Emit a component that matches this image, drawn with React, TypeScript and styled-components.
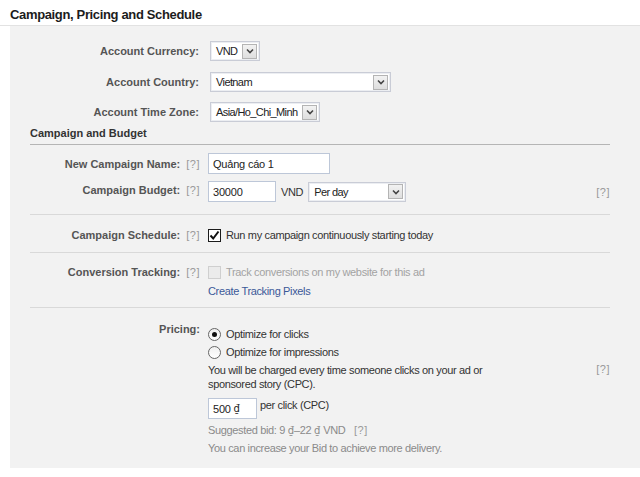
import { FC, ReactNode } from "react";
import styled, { createGlobalStyle } from "styled-components";

const GlobalStyle = createGlobalStyle`
  html, body {
    margin: 0;
    padding: 0;
    background: #ffffff;
  }
  body {
    font-family: "Liberation Sans", Arial, sans-serif;
    font-size: 11px;
    color: #333333;
  }
`;

const Page = styled.div`
  width: 640px;
  height: 477px;
  overflow: hidden;
`;

const Title = styled.h2`
  margin: 0;
  height: 25px;
  padding: 0 0 0 10px;
  line-height: 30px;
  font-size: 13px;
  letter-spacing: -0.35px;
  font-weight: bold;
  color: #1c1c1c;
  border-bottom: 1px solid #e2e2e2;
`;

const Panel = styled.div`
  margin-left: 10px;
  height: 442px;
  padding-top: 15px;
  box-sizing: border-box;
  background: #f2f2f2;
`;

const Section = styled.div<{ $divider?: boolean; $pt?: number; $pb?: number; $mt?: number }>`
  margin: ${(p) => p.$mt ?? 0}px 30px 0 20px;
  padding: ${(p) => p.$pt ?? 0}px 0 ${(p) => p.$pb ?? 0}px;
  border-top: ${(p) => (p.$divider ? "1px solid #d9d9d9" : "none")};
`;

const Row = styled.div<{ $labelWidth?: number; $gap?: number; $top?: number; $alignTop?: boolean }>`
  display: grid;
  grid-template-columns: ${(p) => p.$labelWidth ?? 170}px 1fr;
  column-gap: ${(p) => p.$gap ?? 8}px;
  align-items: ${(p) => (p.$alignTop ? "start" : "center")};
  margin-top: ${(p) => p.$top ?? 0}px;
`;

const Label = styled.div<{ $lineHeight?: number }>`
  text-align: right;
  font-weight: bold;
  color: #555555;
  white-space: nowrap;
  line-height: ${(p) => p.$lineHeight ?? 14}px;
`;

const Help = styled.span`
  font-weight: normal;
  color: #9a9a9a;
  margin-left: 6px;
  letter-spacing: 0.5px;
`;

const Controls = styled.div<{ $gap?: number; $top?: number; $alignTop?: boolean }>`
  display: flex;
  align-items: ${(p) => (p.$alignTop ? "flex-start" : "center")};
  gap: ${(p) => p.$gap ?? 6}px;
  margin-top: ${(p) => p.$top ?? 0}px;
`;

const Stack = styled.div<{ $pt?: number }>`
  display: flex;
  flex-direction: column;
  padding-top: ${(p) => p.$pt ?? 0}px;
`;

const SelectBox = styled.div<{ $width: number }>`
  width: ${(p) => p.$width}px;
  height: 20px;
  box-sizing: border-box;
  border: 1px solid #c9ccd6;
  box-shadow: inset 0 0 0 1px #eceef2;
  background: #ffffff;
  display: flex;
  align-items: center;
  justify-content: space-between;
  padding: 0 2px 0 5px;
  color: #222222;
  letter-spacing: -0.6px;
`;

const ArrowButton = styled.span`
  width: 15px;
  height: 15px;
  box-sizing: border-box;
  border: 1px solid #b4b4b4;
  background: linear-gradient(#f2f2f2, #dedede);
  display: flex;
  align-items: center;
  justify-content: center;
  flex: none;
`;

const TextInput = styled.div<{ $width: number }>`
  width: ${(p) => p.$width}px;
  height: 21px;
  box-sizing: border-box;
  border: 1px solid #bdc7d8;
  background: #ffffff;
  padding: 0 4px;
  display: flex;
  align-items: center;
  font-size: 11px;
  letter-spacing: -0.2px;
  color: #222222;
`;

const SubHeading = styled.div`
  margin: 1px 30px 0 20px;
  padding: 3px 0 4px;
  font-weight: bold;
  color: #333333;
  font-size: 11px;
  line-height: 14px;
  border-bottom: 1px solid #b5b5b5;
`;

const CheckBox = styled.span<{ $disabled?: boolean }>`
  width: 13px;
  height: 13px;
  box-sizing: border-box;
  border: 1px solid ${(p) => (p.$disabled ? "#cfcfcf" : "#1c1c1c")};
  background: ${(p) => (p.$disabled ? "#ebebeb" : "#ffffff")};
  display: inline-flex;
  align-items: center;
  justify-content: center;
  flex: none;
`;

const Radio = styled.span<{ $checked?: boolean }>`
  width: 13px;
  height: 13px;
  box-sizing: border-box;
  border-radius: 50%;
  border: 1px solid #666666;
  background: linear-gradient(#f0f0f0, #ffffff);
  display: inline-flex;
  align-items: center;
  justify-content: center;
  flex: none;
  &::after {
    content: "";
    display: ${(p) => (p.$checked ? "block" : "none")};
    width: 5px;
    height: 5px;
    border-radius: 50%;
    background: #111111;
  }
`;

const Option = styled.div<{ $muted?: boolean }>`
  display: flex;
  align-items: center;
  gap: 5px;
  height: 18px;
  letter-spacing: -0.35px;
  color: ${(p) => (p.$muted ? "#a3a3a3" : "#333333")};
`;

const Text = styled.div<{ $muted?: boolean; $top?: number }>`
  color: ${(p) => (p.$muted ? "#8a8a8a" : "#333333")};
  line-height: 14px;
  letter-spacing: -0.35px;
  margin-top: ${(p) => p.$top ?? 0}px;
`;

const Link = styled.a`
  color: #3b5998;
  text-decoration: none;
  line-height: 14px;
  letter-spacing: -0.35px;
  margin-top: 3px;
`;

const RightHelp = styled.span`
  margin-left: auto;
  color: #9a9a9a;
  letter-spacing: 0.5px;
`;

const Dong = styled.span`
  font-family: "DejaVu Sans", sans-serif;
  font-size: 10px;
  letter-spacing: 0;
`;

const Chevron: FC = () => (
  <svg width="8" height="6" viewBox="0 0 8 6">
    <path d="M1 1.5 L4 4.5 L7 1.5" fill="none" stroke="#444" strokeWidth="1.6" />
  </svg>
);

const Select: FC<{ width: number; children: ReactNode }> = ({ width, children }) => (
  <SelectBox $width={width}>
    <span>{children}</span>
    <ArrowButton>
      <Chevron />
    </ArrowButton>
  </SelectBox>
);

const Tick: FC = () => (
  <svg width="11" height="11" viewBox="0 0 11 11">
    <path d="M1.5 5.5 L4.2 8.5 L9.5 1.5" fill="none" stroke="#111" strokeWidth="2" />
  </svg>
);

const App: FC = () => {
  return (
    <Page>
      <GlobalStyle />
      <Title>Campaign, Pricing and Schedule</Title>
      <Panel>
        <Section>
          <Row $labelWidth={169} $gap={11}>
            <Label>Account Currency:</Label>
            <div>
              <Select width={50}>VND</Select>
            </div>
          </Row>
          <Row $labelWidth={169} $gap={11} $top={11}>
            <Label>Account Country:</Label>
            <div>
              <Select width={181}>Vietnam</Select>
            </div>
          </Row>
          <Row $labelWidth={169} $gap={11} $top={10}>
            <Label>Account Time Zone:</Label>
            <div>
              <Select width={110}>Asia/Ho_Chi_Minh</Select>
            </div>
          </Row>
        </Section>
        <SubHeading>Campaign and Budget</SubHeading>
        <Section>
          <Row $top={8}>
            <Label>
              New Campaign Name:<Help>[?]</Help>
            </Label>
            <div>
              <TextInput $width={122}>Quảng cáo 1</TextInput>
            </div>
          </Row>
          <Row $top={7} $alignTop>
            <Label $lineHeight={18}>
              Campaign Budget:<Help>[?]</Help>
            </Label>
            <Controls $gap={5}>
              <TextInput $width={68}>30000</TextInput>
              <Text>VND</Text>
              <Select width={98}>Per day</Select>
              <RightHelp>[?]</RightHelp>
            </Controls>
          </Row>
        </Section>
        <Section $divider $mt={12} $pt={11} $pb={8}>
          <Row>
            <Label>
              Campaign Schedule:<Help>[?]</Help>
            </Label>
            <Option>
              <CheckBox>
                <Tick />
              </CheckBox>
              Run my campaign continuously starting today
            </Option>
          </Row>
        </Section>
        <Section $divider $pt={10} $pb={9}>
          <Row $alignTop>
            <Label $lineHeight={18}>
              Conversion Tracking:<Help>[?]</Help>
            </Label>
            <Stack>
              <Option $muted>
                <CheckBox $disabled />
                Track conversions on my website for this ad
              </Option>
              <Link>Create Tracking Pixels</Link>
            </Stack>
          </Row>
        </Section>
        <Section $divider $pt={14}>
          <Row $alignTop>
            <Label>Pricing:</Label>
            <Stack $pt={3}>
              <Option>
                <Radio $checked />
                Optimize for clicks
              </Option>
              <Option>
                <Radio />
                Optimize for impressions
              </Option>
              <Controls $alignTop $top={2}>
                <Text>
                  You will be charged every time someone clicks on your ad or
                  <br />
                  sponsored story (CPC).
                </Text>
                <RightHelp>[?]</RightHelp>
              </Controls>
              <Controls $alignTop $top={7} $gap={3}>
                <TextInput $width={49}>
                  500&nbsp;<Dong>₫</Dong>
                </TextInput>
                <Text>per click (CPC)</Text>
              </Controls>
              <Text $muted $top={4}>
                Suggested bid: 9 <Dong>₫</Dong>–22 <Dong>₫</Dong> VND <Help>[?]</Help>
              </Text>
              <Text $muted $top={3}>
                You can increase your Bid to achieve more delivery.
              </Text>
            </Stack>
          </Row>
        </Section>
      </Panel>
    </Page>
  );
};

export default App;
